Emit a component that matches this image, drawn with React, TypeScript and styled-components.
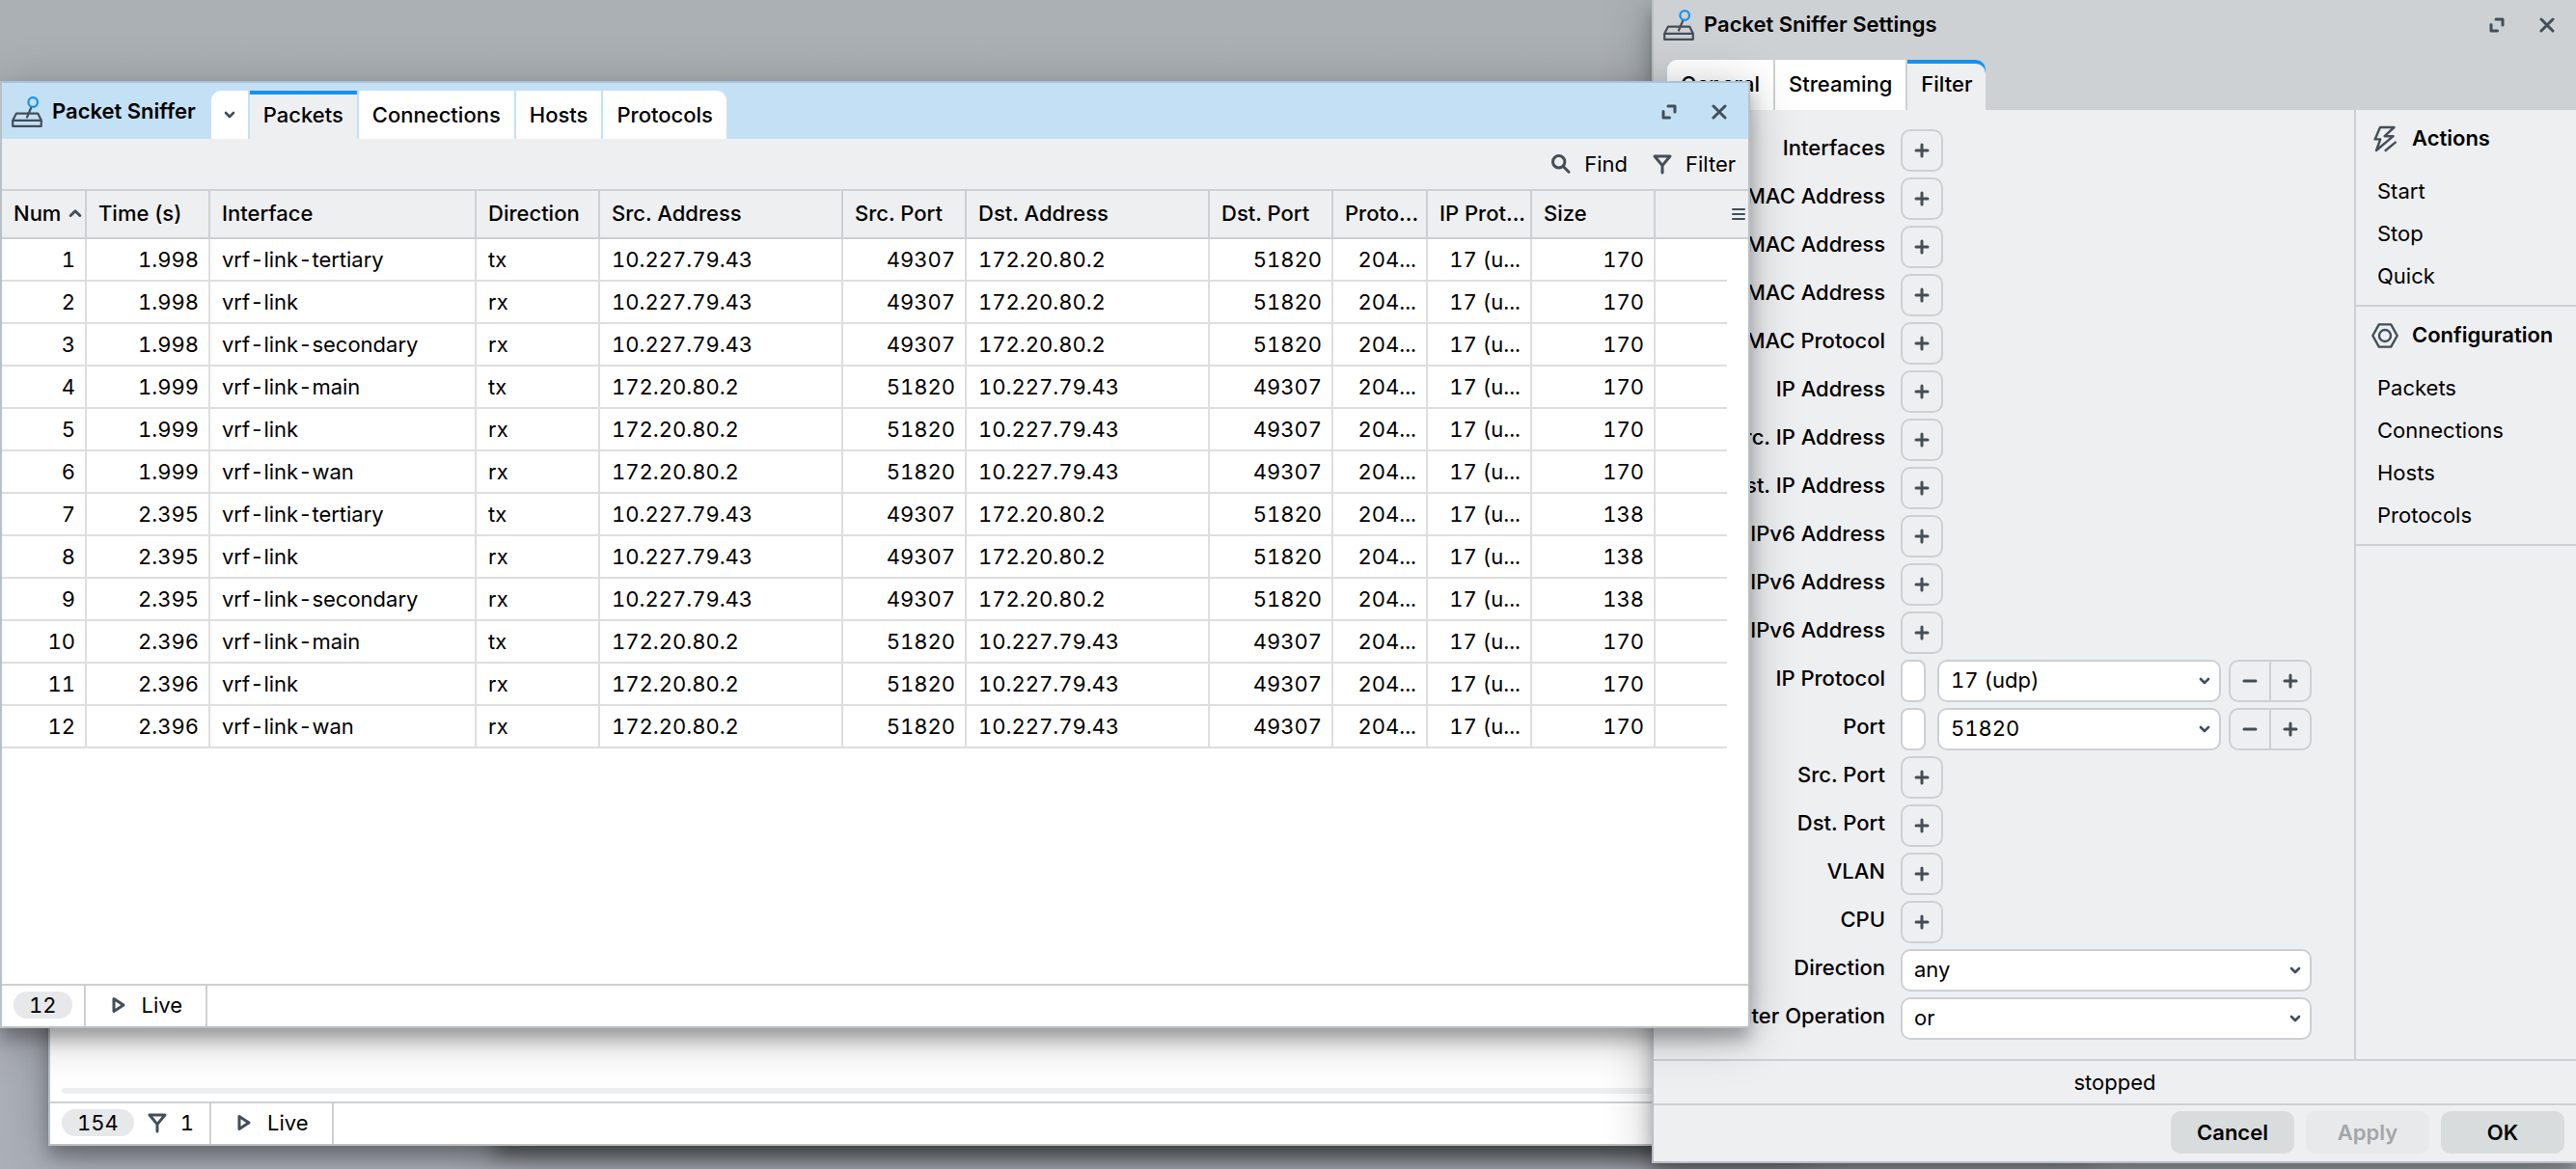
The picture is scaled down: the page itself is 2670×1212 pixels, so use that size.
import React from "react";
import styled, { createGlobalStyle, css } from "styled-components";

const color = {
  ink: "#000000",
  icon: "#434e58",
  accent: "#1592ee",
  panel: "#eeeff1",
  line: "#cdd0d3",
  cellLine: "#dedede",
  frame: "#b9c0c6",
  activeTitle: "#c4e0f5",
  idleTitle: "#cdd1d4",
};

const GlobalStyle = createGlobalStyle`
  *, *::before, *::after { box-sizing: border-box; }
  body {
    margin: 0;
    background: #abafb8;
    color: ${color.ink};
    font: 400 22px/28px Inter, "Liberation Sans", sans-serif;
  }
  button, input, select {
    margin: 0;
    padding: 0;
    border: 0;
    background: none;
    color: inherit;
    font: inherit;
  }
  svg { display: block; flex: none; }
`;

/* ---------- icons ---------- */

const Glyph = styled.svg`
  fill: none;
  stroke: ${color.icon};
  stroke-width: 3;
  stroke-linecap: round;
  stroke-linejoin: round;
`;

const SnifferIcon = () => (
  <Glyph width="32" height="32" viewBox="0 0 32 32" aria-hidden>
    <g strokeWidth="2.2">
      <path d="M1.2 24.8 5 17.6H27.2L30.8 24.8V30.8H1.2ZM1.2 24.8H30.8" />
      <path d="M20.3 11.5 16 21.5" />
      <circle cx="22.2" cy="6" r="4.8" stroke={color.accent} />
    </g>
  </Glyph>
);

const ExpandIcon = () => (
  <Glyph width="16" height="16" viewBox="0 0 16 16" aria-hidden>
    <path d="M7 2H14V8M2 7.5V14H8.5" />
  </Glyph>
);

const CloseIcon = () => (
  <Glyph width="16" height="16" viewBox="0 0 16 16" aria-hidden>
    <path d="M2 2 14 14M14 2 2 14" />
  </Glyph>
);

const ChevronDown = () => (
  <Glyph width="12" height="8" viewBox="0 0 12 8" aria-hidden>
    <path d="M2 2 6 6 10 2" strokeWidth="2.6" />
  </Glyph>
);

const ChevronUp = () => (
  <Glyph width="14" height="10" viewBox="0 0 14 10" aria-hidden>
    <path d="M2.2 7.5 7 2.8 11.8 7.5" />
  </Glyph>
);

const SearchIcon = () => (
  <Glyph width="24" height="24" viewBox="0 0 24 24" aria-hidden>
    <circle cx="9.7" cy="9.8" r="6.2" />
    <path d="M14.5 14.8 20 20.2" />
  </Glyph>
);

const FunnelIcon = () => (
  <Glyph width="24" height="24" viewBox="0 0 24 24" aria-hidden>
    <path d="M4 4H20L12 13.6ZM12 13.6V21" />
  </Glyph>
);

const MenuIcon = () => (
  <Glyph width="14" height="14" viewBox="0 0 14 14" aria-hidden>
    <path d="M1 2H13M1 7H13M1 12H13" strokeWidth="2" />
  </Glyph>
);

const PlayIcon = () => (
  <Glyph width="16" height="18" viewBox="0 0 16 18" aria-hidden>
    <path d="M3 2.6V15.4L13 9Z" />
  </Glyph>
);

const PlusIcon = () => (
  <Glyph width="18" height="18" viewBox="0 0 18 18" aria-hidden>
    <path d="M3 9H15M9 3V15" />
  </Glyph>
);

const MinusIcon = () => (
  <Glyph width="18" height="18" viewBox="0 0 18 18" aria-hidden>
    <path d="M3 9H15" />
  </Glyph>
);

const BoltIcon = () => (
  <Glyph width="28" height="28" viewBox="0 0 28 28" aria-hidden>
    <g strokeWidth="2.4">
      <path d="M9 2H23.5L13.6 11.2H22.6L5 26 9.2 14.4H3.6Z" />
      <path d="M24.8 17.6 14.6 26" />
    </g>
  </Glyph>
);

const NutIcon = () => (
  <Glyph width="28" height="28" viewBox="0 0 28 28" aria-hidden>
    <g strokeWidth="2.4">
      <path d="M1.3 14 7.8 2.4H20.2L26.7 14 20.2 25.6H7.8Z" />
      <circle cx="14" cy="14" r="6" />
    </g>
  </Glyph>
);

/* ---------- desktop and windows ---------- */

const Desktop = styled.div`
  position: relative;
  min-height: 100vh;
  overflow: hidden;
  background: linear-gradient(#abb0b4, #abafb8);
`;

const Window = styled.section`
  position: absolute;
  display: flex;
  flex-direction: column;
  border: 2px solid ${color.frame};
  background: #fff;
  box-shadow: 0 12px 16px rgba(0, 0, 0, 0.26), 0 8px 48px rgba(0, 0, 0, 0.25);
`;

const HiddenWindow = styled(Window)`
  top: 240px;
  bottom: 24px;
  left: 512px;
  right: 500px;
`;

const TorchWindow = styled(Window)`
  top: 200px;
  bottom: 24px;
  left: 50px;
  right: 800px;
  justify-content: flex-end;
`;

const SettingsWindow = styled(Window)`
  top: 0;
  right: 0;
  bottom: 6px;
  width: 958px;
  border-width: 0 0 2px 2px;
  background: ${color.panel};
`;

const SnifferWindow = styled(Window)`
  top: 84px;
  bottom: 146px;
  left: 0;
  width: calc(100% - 856px);
  border-top-color: #a9c2d5;
`;

const TitleRow = styled.header<{ $active?: boolean }>`
  display: flex;
  align-items: flex-start;
  flex: none;
  background: ${(p) => (p.$active ? color.activeTitle : color.idleTitle)};
  height: ${(p) => (p.$active ? "58px" : "52px")};
  padding: ${(p) => (p.$active ? "4px 4px 0 10px" : "0 4px 0 10px")};
`;

const Title = styled.h1`
  display: flex;
  align-items: center;
  gap: 10px;
  height: 52px;
  margin: 0 16px 0 0;
  font-size: 22px;
  font-weight: 600;
  white-space: nowrap;

  span { padding-bottom: 2px; }
`;

const WindowControls = styled.div`
  display: flex;
  margin-left: auto;
`;

const ControlButton = styled.button`
  display: grid;
  place-items: center;
  width: 52px;
  height: 52px;
`;

const Tabs = styled.nav<{ $standalone?: boolean }>`
  display: flex;
  gap: 2px;
  ${(p) =>
    p.$standalone
      ? css`
          flex: none;
          padding: 10px 14px 0;
          background: ${color.idleTitle};
        `
      : css`
          padding-top: 4px;
        `}
`;

const Tab = styled.button<{ $active?: boolean; $tall?: boolean }>`
  display: grid;
  place-items: center;
  height: ${(p) => (p.$tall ? "52px" : "50px")};
  padding: ${(p) => (p.$tall ? "0 14px 2px" : "0 14px")};
  background: ${(p) => (p.$active ? color.panel : "#fff")};
  box-shadow: ${(p) => (p.$active ? `inset 0 4px ${color.accent}` : "none")};
  font-weight: 500;
  white-space: nowrap;

  &:first-child { border-top-left-radius: 10px; }
  &:last-child { border-top-right-radius: 10px; }
`;

const TabMenu = styled(Tab)`
  width: 38px;
  padding: 0;
`;

/* ---------- packet list ---------- */

const Toolbar = styled.div`
  display: flex;
  align-items: center;
  justify-content: flex-end;
  gap: 24px;
  flex: none;
  height: 54px;
  padding-right: 13px;
  border-bottom: 2px solid ${color.line};
  background: ${color.panel};
`;

const ToolButton = styled.button`
  display: flex;
  align-items: center;
  gap: 12px;
`;

const TableArea = styled.div`
  flex: 1;
  min-height: 0;
  overflow: hidden;
`;

const PacketTable = styled.table`
  width: 100%;
  table-layout: fixed;
  border-collapse: separate;
  border-spacing: 0;
`;

const Col = styled.col<{ $w?: number }>`
  width: ${(p) => (p.$w ? `${p.$w}px` : "auto")};
`;

const HeadCell = styled.th`
  height: 50px;
  padding: 0 4px 2px 12px;
  border-right: 2px solid ${color.line};
  border-bottom: 2px solid ${color.line};
  background: ${color.panel};
  font-weight: 500;
  text-align: left;
  white-space: nowrap;

  &:last-child {
    padding-right: 2px;
    border-right: 0;
  }
`;

const HeadLabel = styled.span`
  display: flex;
  align-items: center;
  gap: 8px;
`;

const MenuButton = styled.button`
  display: block;
  margin-left: auto;
  padding: 2px 1px 0;
`;

const Cell = styled.td<{ $numeric?: boolean }>`
  height: 44px;
  padding: 0 10px 0 12px;
  border-right: 2px solid ${color.cellLine};
  border-bottom: 2px solid ${color.cellLine};
  font-variant-numeric: tabular-nums;
  text-align: ${(p) => (p.$numeric ? "right" : "left")};
  white-space: nowrap;
`;

const FillerCell = styled(Cell)`
  border-right: 0;
`;

const GutterCell = styled.td`
  padding: 0;
`;

const StatusBar = styled.footer`
  display: flex;
  flex: none;
  height: 44px;
  border-top: 2px solid ${color.line};
  background: #fff;
  font-variant-numeric: tabular-nums;
`;

const StatusGroup = styled.div`
  display: flex;
  align-items: center;
  gap: 12px;
  padding: 0 12px 2px;
  border-right: 2px solid ${color.line};
`;

const FilterCount = styled.span`
  display: flex;
  align-items: center;
  gap: 12px;
  padding-right: 4px;
`;

const LiveButton = styled.button`
  display: flex;
  align-items: center;
  gap: 16px;
  padding: 0 24px 2px 26px;
  border-right: 2px solid ${color.line};
`;

const CountPill = styled.span`
  padding: 0 16px;
  border-radius: 14px;
  background: #e7e8ea;
`;

const ScrollTrack = styled.div`
  flex: none;
  height: 6px;
  margin: 0 12px 8px;
  border-radius: 3px;
  background: ${color.panel};
`;

/* ---------- settings ---------- */

const SettingsBody = styled.div`
  display: flex;
  flex: 1;
  min-height: 0;
`;

const FilterForm = styled.form`
  display: flex;
  flex: 1;
  flex-direction: column;
  gap: 6px;
  padding: 20px 44px 20px 0;
`;

const Field = styled.div`
  display: grid;
  grid-template-columns: 240px 1fr;
  column-gap: 16px;
`;

const FieldLabel = styled.label`
  line-height: 38px;
  font-weight: 500;
  text-align: right;
  white-space: nowrap;
`;

const FieldControls = styled.div`
  display: flex;
  gap: 8px;
`;

const AddButton = styled.button`
  display: grid;
  place-items: center;
  width: 44px;
  height: 44px;
  border: 2px solid ${color.line};
  border-radius: 10px;
`;

const Negate = styled.input`
  appearance: none;
  width: 26px;
  height: 44px;
  margin-right: 4px;
  border: 2px solid ${color.line};
  border-radius: 8px;
  background: #fff;
`;

const SelectBox = styled.span`
  display: grid;
  flex: 1;
  align-items: center;

  > * { grid-area: 1 / 1; }
  > svg {
    justify-self: end;
    margin-right: 11px;
    pointer-events: none;
  }
`;

const Select = styled.select`
  appearance: none;
  width: 100%;
  height: 44px;
  padding: 0 36px 2px 12px;
  border: 2px solid ${color.line};
  border-radius: 10px;
  background: #fff;
  font-variant-numeric: tabular-nums;
`;

const Stepper = styled.div`
  display: flex;
  height: 44px;
  border: 2px solid ${color.line};
  border-radius: 10px;
`;

const StepButton = styled.button`
  display: grid;
  place-items: center;
  width: 40px;

  & + & {
    width: 42px;
    border-left: 2px solid ${color.line};
  }
`;

const Sidebar = styled.aside`
  width: 230px;
  border-left: 2px solid ${color.line};
`;

const SideSection = styled.section`
  padding-bottom: 8px;
  border-bottom: 2px solid ${color.line};
`;

const SideHeading = styled.h2`
  display: flex;
  align-items: center;
  gap: 14px;
  height: 60px;
  margin: 0 0 2px;
  padding: 0 16px;
  font-size: 22px;
  font-weight: 600;

  span { padding-bottom: 2px; }
`;

const SideItem = styled.button`
  display: block;
  width: 100%;
  height: 44px;
  padding: 0 22px;
  text-align: left;
`;

const StatusLine = styled.p`
  flex: none;
  margin: 0;
  border-top: 2px solid ${color.line};
  border-bottom: 2px solid ${color.line};
  line-height: 44px;
  text-align: center;
`;

const DialogButtons = styled.footer`
  display: flex;
  justify-content: flex-end;
  gap: 12px;
  flex: none;
  padding: 6px 12px 8px;
`;

const DialogButton = styled.button`
  width: 128px;
  height: 44px;
  border-radius: 10px;
  background: #d9dcdd;
  font-weight: 600;

  &:disabled {
    background: #e8e9eb;
    color: #a3a5a7;
  }
`;

/* ---------- data ---------- */

const columns: { title: string; width: number; numeric?: boolean }[] = [
  { title: "Num", width: 88, numeric: true },
  { title: "Time (s)", width: 128, numeric: true },
  { title: "Interface", width: 276 },
  { title: "Direction", width: 128 },
  { title: "Src. Address", width: 252 },
  { title: "Src. Port", width: 128, numeric: true },
  { title: "Dst. Address", width: 252 },
  { title: "Dst. Port", width: 128, numeric: true },
  { title: "Proto...", width: 98, numeric: true },
  { title: "IP Prot...", width: 108, numeric: true },
  { title: "Size", width: 128, numeric: true },
];

const client = { address: "10.227.79.43", port: "49307" };
const server = { address: "172.20.80.2", port: "51820" };

const packet = (time: string, iface: string, direction: "tx" | "rx", outgoing: boolean, size: number) => {
  const [src, dst] = outgoing ? [client, server] : [server, client];
  return [time, iface, direction, src.address, src.port, dst.address, dst.port, "204...", "17 (u...", String(size)];
};

const packets = [
  packet("1.998", "vrf-link-tertiary", "tx", true, 170),
  packet("1.998", "vrf-link", "rx", true, 170),
  packet("1.998", "vrf-link-secondary", "rx", true, 170),
  packet("1.999", "vrf-link-main", "tx", false, 170),
  packet("1.999", "vrf-link", "rx", false, 170),
  packet("1.999", "vrf-link-wan", "rx", false, 170),
  packet("2.395", "vrf-link-tertiary", "tx", true, 138),
  packet("2.395", "vrf-link", "rx", true, 138),
  packet("2.395", "vrf-link-secondary", "rx", true, 138),
  packet("2.396", "vrf-link-main", "tx", false, 170),
  packet("2.396", "vrf-link", "rx", false, 170),
  packet("2.396", "vrf-link-wan", "rx", false, 170),
];

type FieldSpec = { label: string; kind?: "add" | "match" | "choice"; value?: string };

const fields: FieldSpec[] = [
  { label: "Interfaces" },
  { label: "MAC Address" },
  { label: "Src. MAC Address" },
  { label: "Dst. MAC Address" },
  { label: "MAC Protocol" },
  { label: "IP Address" },
  { label: "Src. IP Address" },
  { label: "Dst. IP Address" },
  { label: "IPv6 Address" },
  { label: "Src. IPv6 Address" },
  { label: "Dst. IPv6 Address" },
  { label: "IP Protocol", kind: "match", value: "17 (udp)" },
  { label: "Port", kind: "match", value: "51820" },
  { label: "Src. Port" },
  { label: "Dst. Port" },
  { label: "VLAN" },
  { label: "CPU" },
  { label: "Direction", kind: "choice", value: "any" },
  { label: "Filter Operation", kind: "choice", value: "or" },
];

const sideSections = [
  { title: "Actions", icon: <BoltIcon />, items: ["Start", "Stop", "Quick"] },
  { title: "Configuration", icon: <NutIcon />, items: ["Packets", "Connections", "Hosts", "Protocols"] },
];

/* ---------- parts ---------- */

const Controls = () => (
  <WindowControls>
    <ControlButton type="button" aria-label="Maximize">
      <ExpandIcon />
    </ControlButton>
    <ControlButton type="button" aria-label="Close">
      <CloseIcon />
    </ControlButton>
  </WindowControls>
);

const Live = () => (
  <LiveButton type="button">
    <PlayIcon />
    Live
  </LiveButton>
);

const FormField = ({ label, kind = "add", value }: FieldSpec) => {
  const id = React.useId();
  return (
    <Field>
      <FieldLabel htmlFor={id}>{label}</FieldLabel>
      <FieldControls>
        {kind === "add" && (
          <AddButton id={id} type="button">
            <PlusIcon />
          </AddButton>
        )}
        {kind === "match" && <Negate type="checkbox" aria-label={`Not ${label}`} />}
        {kind !== "add" && (
          <SelectBox>
            <Select id={id} defaultValue={value}>
              <option>{value}</option>
            </Select>
            <ChevronDown />
          </SelectBox>
        )}
        {kind === "match" && (
          <Stepper>
            <StepButton type="button" aria-label={`Remove ${label}`}>
              <MinusIcon />
            </StepButton>
            <StepButton type="button" aria-label={`Add ${label}`}>
              <PlusIcon />
            </StepButton>
          </Stepper>
        )}
      </FieldControls>
    </Field>
  );
};

const Settings = () => (
  <SettingsWindow>
    <TitleRow>
      <Title>
        <SnifferIcon />
        <span>Packet Sniffer Settings</span>
      </Title>
      <Controls />
    </TitleRow>
    <Tabs $standalone>
      <Tab type="button" $tall>General</Tab>
      <Tab type="button" $tall>Streaming</Tab>
      <Tab type="button" $tall $active>Filter</Tab>
    </Tabs>
    <SettingsBody>
      <FilterForm>
        {fields.map((f) => (
          <FormField key={f.label} {...f} />
        ))}
      </FilterForm>
      <Sidebar>
        {sideSections.map((s) => (
          <SideSection key={s.title}>
            <SideHeading>
              {s.icon}
              <span>{s.title}</span>
            </SideHeading>
            {s.items.map((item) => (
              <SideItem key={item} type="button">{item}</SideItem>
            ))}
          </SideSection>
        ))}
      </Sidebar>
    </SettingsBody>
    <StatusLine>stopped</StatusLine>
    <DialogButtons>
      <DialogButton type="button">Cancel</DialogButton>
      <DialogButton type="button" disabled>Apply</DialogButton>
      <DialogButton type="button">OK</DialogButton>
    </DialogButtons>
  </SettingsWindow>
);

const Sniffer = () => (
  <SnifferWindow>
    <TitleRow $active>
      <Title>
        <SnifferIcon />
        <span>Packet Sniffer</span>
      </Title>
      <Tabs>
        <TabMenu type="button" aria-label="All tabs">
          <ChevronDown />
        </TabMenu>
        <Tab type="button" $active>Packets</Tab>
        <Tab type="button">Connections</Tab>
        <Tab type="button">Hosts</Tab>
        <Tab type="button">Protocols</Tab>
      </Tabs>
      <Controls />
    </TitleRow>
    <Toolbar>
      <ToolButton type="button">
        <SearchIcon />
        Find
      </ToolButton>
      <ToolButton type="button">
        <FunnelIcon />
        Filter
      </ToolButton>
    </Toolbar>
    <TableArea>
      <PacketTable>
        <colgroup>
          {columns.map((c) => (
            <Col key={c.title} $w={c.width} />
          ))}
          <Col />
          <Col $w={22} />
        </colgroup>
        <thead>
          <tr>
            {columns.map((c, i) => (
              <HeadCell key={c.title} scope="col">
                <HeadLabel>
                  {c.title}
                  {i === 0 && <ChevronUp />}
                </HeadLabel>
              </HeadCell>
            ))}
            <HeadCell colSpan={2}>
              <MenuButton type="button" aria-label="Columns">
                <MenuIcon />
              </MenuButton>
            </HeadCell>
          </tr>
        </thead>
        <tbody>
          {packets.map((row, n) => (
            <tr key={n}>
              {[String(n + 1), ...row].map((text, i) => (
                <Cell key={i} $numeric={columns[i].numeric}>{text}</Cell>
              ))}
              <FillerCell />
              <GutterCell />
            </tr>
          ))}
        </tbody>
      </PacketTable>
    </TableArea>
    <StatusBar>
      <StatusGroup>
        <CountPill>12</CountPill>
      </StatusGroup>
      <Live />
    </StatusBar>
  </SnifferWindow>
);

export default function App() {
  return (
    <>
      <GlobalStyle />
      <Desktop>
        <HiddenWindow aria-hidden />
        <TorchWindow>
          <ScrollTrack />
          <StatusBar>
            <StatusGroup>
              <CountPill>154</CountPill>
              <FilterCount>
                <FunnelIcon />
                1
              </FilterCount>
            </StatusGroup>
            <Live />
          </StatusBar>
        </TorchWindow>
        <Settings />
        <Sniffer />
      </Desktop>
    </>
  );
}
